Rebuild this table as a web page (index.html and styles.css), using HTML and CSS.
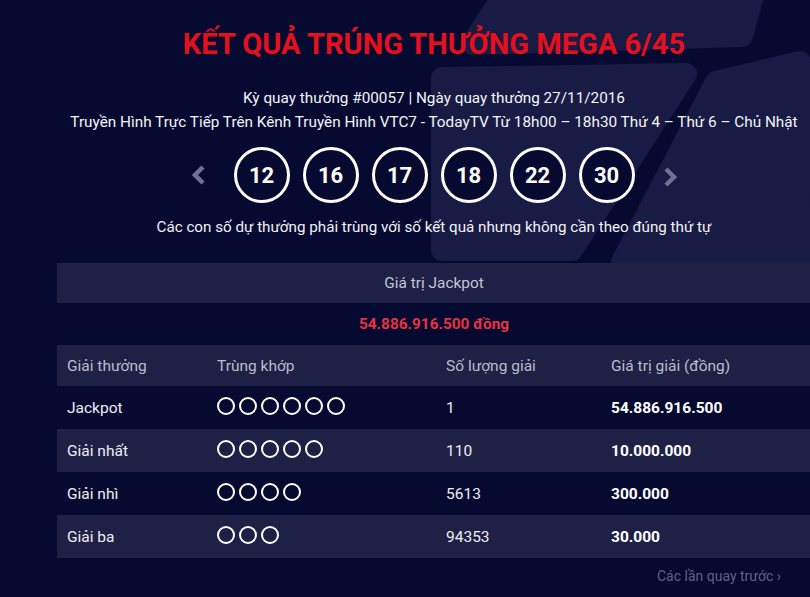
FILE: index.html
```html
<!DOCTYPE html>
<html lang="vi">
<head>
<meta charset="utf-8">
<title>Kết quả Mega 6/45</title>
<link rel="stylesheet" href="styles.css">
</head>
<body>
<div class="page">
  <svg class="bg-logo" width="810" height="597" viewBox="0 0 810 597" aria-hidden="true">
    <g fill="#181b44" stroke="#181b44" stroke-width="22" stroke-linejoin="round">
      <polygon points="520,-30 760,-30 742,36 472,44"/>
      <polygon points="442,78 686,74 572,250 442,250"/>
      <polygon points="716,82 800,62 830,262 622,262"/>
    </g>
  </svg>
  <main class="wrap">
    <h1 class="title">KẾT QUẢ TRÚNG THƯỞNG MEGA 6/45</h1>
    <p class="info">Kỳ quay thưởng #00057 | Ngày quay thưởng 27/11/2016</p>
    <p class="info">Truyền Hình Trực Tiếp Trên Kênh Truyền Hình VTC7 - TodayTV Từ 18h00 – 18h30 Thứ 4 – Thứ 6 – Chủ Nhật</p>
    <div class="balls">
      <svg class="arrow" width="16" height="22" viewBox="0 0 16 22"><polyline points="12,3 4,11 12,19" fill="none" stroke="#6e7292" stroke-width="4.5" stroke-linejoin="miter"/></svg>
      <span class="ball">12</span>
      <span class="ball">16</span>
      <span class="ball">17</span>
      <span class="ball">18</span>
      <span class="ball">22</span>
      <span class="ball">30</span>
      <svg class="arrow arrow-r" width="16" height="22" viewBox="0 0 16 22"><polyline points="4,3 12,11 4,19" fill="none" stroke="#6e7292" stroke-width="4.5" stroke-linejoin="miter"/></svg>
    </div>
    <p class="note">Các con số dự thưởng phải trùng với số kết quả nhưng không cần theo đúng thứ tự</p>

    <section class="results">
      <div class="jp-head">Giá trị Jackpot</div>
      <div class="jp-value">54.886.916.500 đồng</div>
      <div class="row head">
        <span>Giải thưởng</span><span>Trùng khớp</span><span>Số lượng giải</span><span>Giá trị giải (đồng)</span>
      </div>
      <div class="row">
        <span>Jackpot</span>
        <span class="rings"><i></i><i></i><i></i><i></i><i></i><i></i></span>
        <span>1</span><span class="val">54.886.916.500</span>
      </div>
      <div class="row alt">
        <span>Giải nhất</span>
        <span class="rings"><i></i><i></i><i></i><i></i><i></i></span>
        <span>110</span><span class="val">10.000.000</span>
      </div>
      <div class="row">
        <span>Giải nhì</span>
        <span class="rings"><i></i><i></i><i></i><i></i></span>
        <span>5613</span><span class="val">300.000</span>
      </div>
      <div class="row alt">
        <span>Giải ba</span>
        <span class="rings"><i></i><i></i><i></i></span>
        <span>94353</span><span class="val">30.000</span>
      </div>
    </section>
    <div class="more"><a href="#">Các lần quay trước ›</a></div>
  </main>
</div>
</body>
</html>
```

FILE: styles.css
```css
* { box-sizing: border-box; }
html, body {
  margin: 0;
  padding: 0;
  background: #070a30;
  overflow: hidden;
}
body {
  font-family: Roboto, "Noto Sans", sans-serif;
  color: #f2f2f6;
  width: 810px;
  height: 597px;
}
.page {
  position: relative;
  width: 810px;
  height: 597px;
}
.bg-logo {
  position: absolute;
  left: 0;
  top: 0;
  z-index: 0;
}
.wrap {
  position: relative;
  z-index: 1;
  margin-left: 57px;
  width: 754px;
  padding-top: 27px;
}
.title {
  margin: 0 0 25px;
  text-align: center;
  color: #e5101e;
  font-size: 29px;
  font-weight: 700;
  line-height: 34px;
}
.info {
  margin: 0;
  text-align: center;
  font-size: 15.3px;
  line-height: 24px;
  color: #f4f4f8;
}
.balls {
  display: flex;
  justify-content: center;
  align-items: center;
  gap: 13px;
  margin-top: 13px;
}
.arrow { margin: 0 14px 0 0; }
.arrow-r { margin: 3px 0 0 14px; }
.ball {
  width: 56px;
  height: 56px;
  border: 3px solid #fff;
  border-radius: 50%;
  background: #070a30;
  display: flex;
  align-items: center;
  justify-content: center;
  font-size: 22px;
  font-weight: 700;
  color: #fff;
}
.note {
  margin: 13px 0 0;
  text-align: center;
  font-size: 15.2px;
  line-height: 22px;
}
.results {
  margin-top: 25px;
}
.jp-head {
  background: #1e2046;
  height: 40px;
  display: flex;
  align-items: center;
  justify-content: center;
  font-size: 15.4px;
  color: #c4c6d4;
}
.jp-value {
  height: 42px;
  display: flex;
  align-items: center;
  justify-content: center;
  font-size: 15.4px;
  font-weight: 700;
  color: #e53342;
}
.row {
  display: grid;
  grid-template-columns: 150px 229px 165px 1fr;
  align-items: center;
  height: 43px;
  padding-left: 10px;
  font-size: 15.5px;
  color: #eeeef4;
}
.row.head {
  background: #1e2046;
  height: 41px;
  color: #b9bbcc;
}
.row.alt { background: #1e2046; }
.val { font-weight: 700; color: #fff; }
.rings {
  display: flex;
  gap: 4px;
  margin-top: -4px;
}
.rings i {
  width: 18px;
  height: 18px;
  border: 2.5px solid #fff;
  border-radius: 50%;
}
.more {
  display: flex;
  justify-content: flex-end;
  padding: 10px 30px 0 0;
}
.more a {
  color: #5e6287;
  text-decoration: none;
  font-size: 14px;
}
```
